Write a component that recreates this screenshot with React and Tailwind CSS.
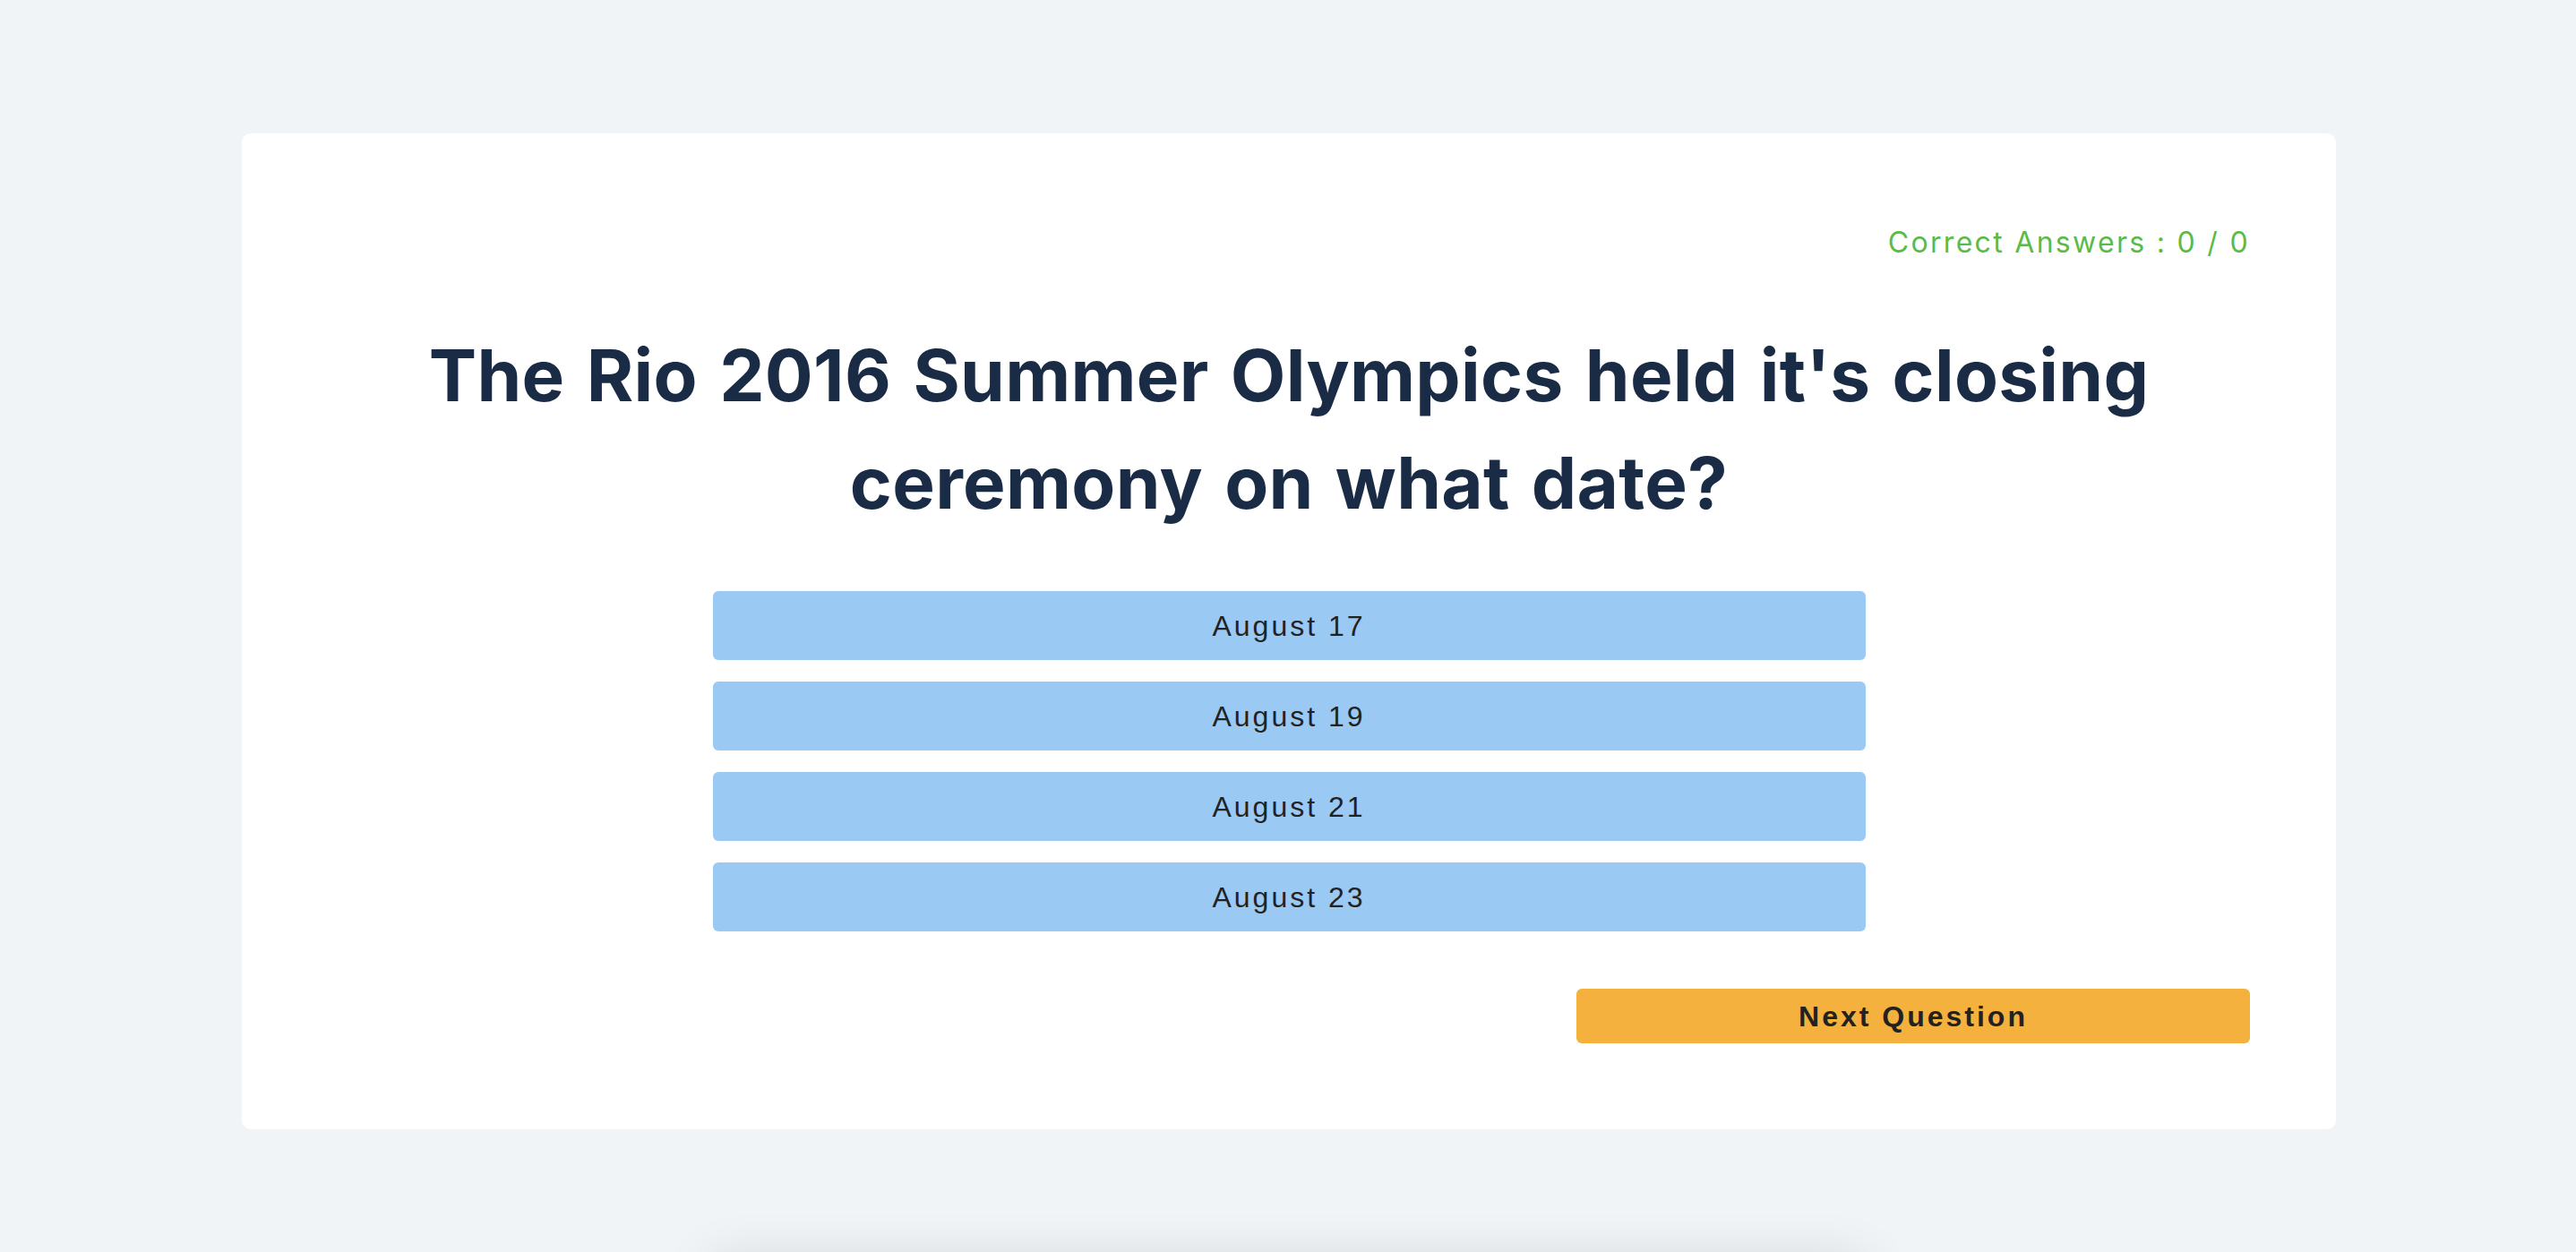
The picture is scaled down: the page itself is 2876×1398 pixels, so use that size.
import React, { useState } from "react";

const question = {
  text: "The Rio 2016 Summer Olympics held it's closing ceremony on what date?",
  answers: ["August 17", "August 19", "August 21", "August 23"],
};

const App = () => {
  const [correct] = useState(0);
  const [answered] = useState(0);

  return (
    <div className="min-h-screen bg-[#f0f4f7] pt-[149px]">
      <div
        className="w-[2338px] mx-auto translate-x-[1px] bg-white rounded-[10px] p-24"
        style={{ fontFamily: "Inter, 'Liberation Sans', sans-serif" }}
      >
        <div className="flex justify-end pt-[2px]">
          <span className="text-[32px] leading-[48px] tracking-[2.3px] text-[#5cba47]">
            Correct Answers : {correct} / {answered}
          </span>
        </div>

        <h1 className="mt-[64px] text-center text-[80px] leading-[120px] font-bold text-[#1a2b45] [word-spacing:5px] tracking-[0.3px]">
          The Rio 2016 Summer Olympics held it's closing
          <br />
          ceremony on what date?
        </h1>

        <div className="mt-[61px] w-[1287px] mx-auto flex flex-col gap-6">
          {question.answers.map((answer) => (
            <button
              key={answer}
              className="h-[77px] w-full rounded-md bg-[#9acaf4] text-[32px] tracking-[3px] text-[#222222]"
              style={{ fontFamily: "'Liberation Sans', Arial, sans-serif" }}
            >
              {answer}
            </button>
          ))}
        </div>

        <div className="mt-16 flex justify-end">
          <button
            className="h-[61px] w-[752px] rounded-md bg-[#f4b13e] text-[32px] font-bold tracking-[3px] text-[#222222]"
            style={{ fontFamily: "'Liberation Sans', Arial, sans-serif" }}
          >
            Next Question
          </button>
        </div>
      </div>

      <div className="mt-[149px] w-[1287px] h-[200px] mx-auto rounded-md bg-[#f0f4f7] shadow-[0_0_60px_0px_rgba(0,0,0,0.14)]" />
    </div>
  );
};

export default App;
